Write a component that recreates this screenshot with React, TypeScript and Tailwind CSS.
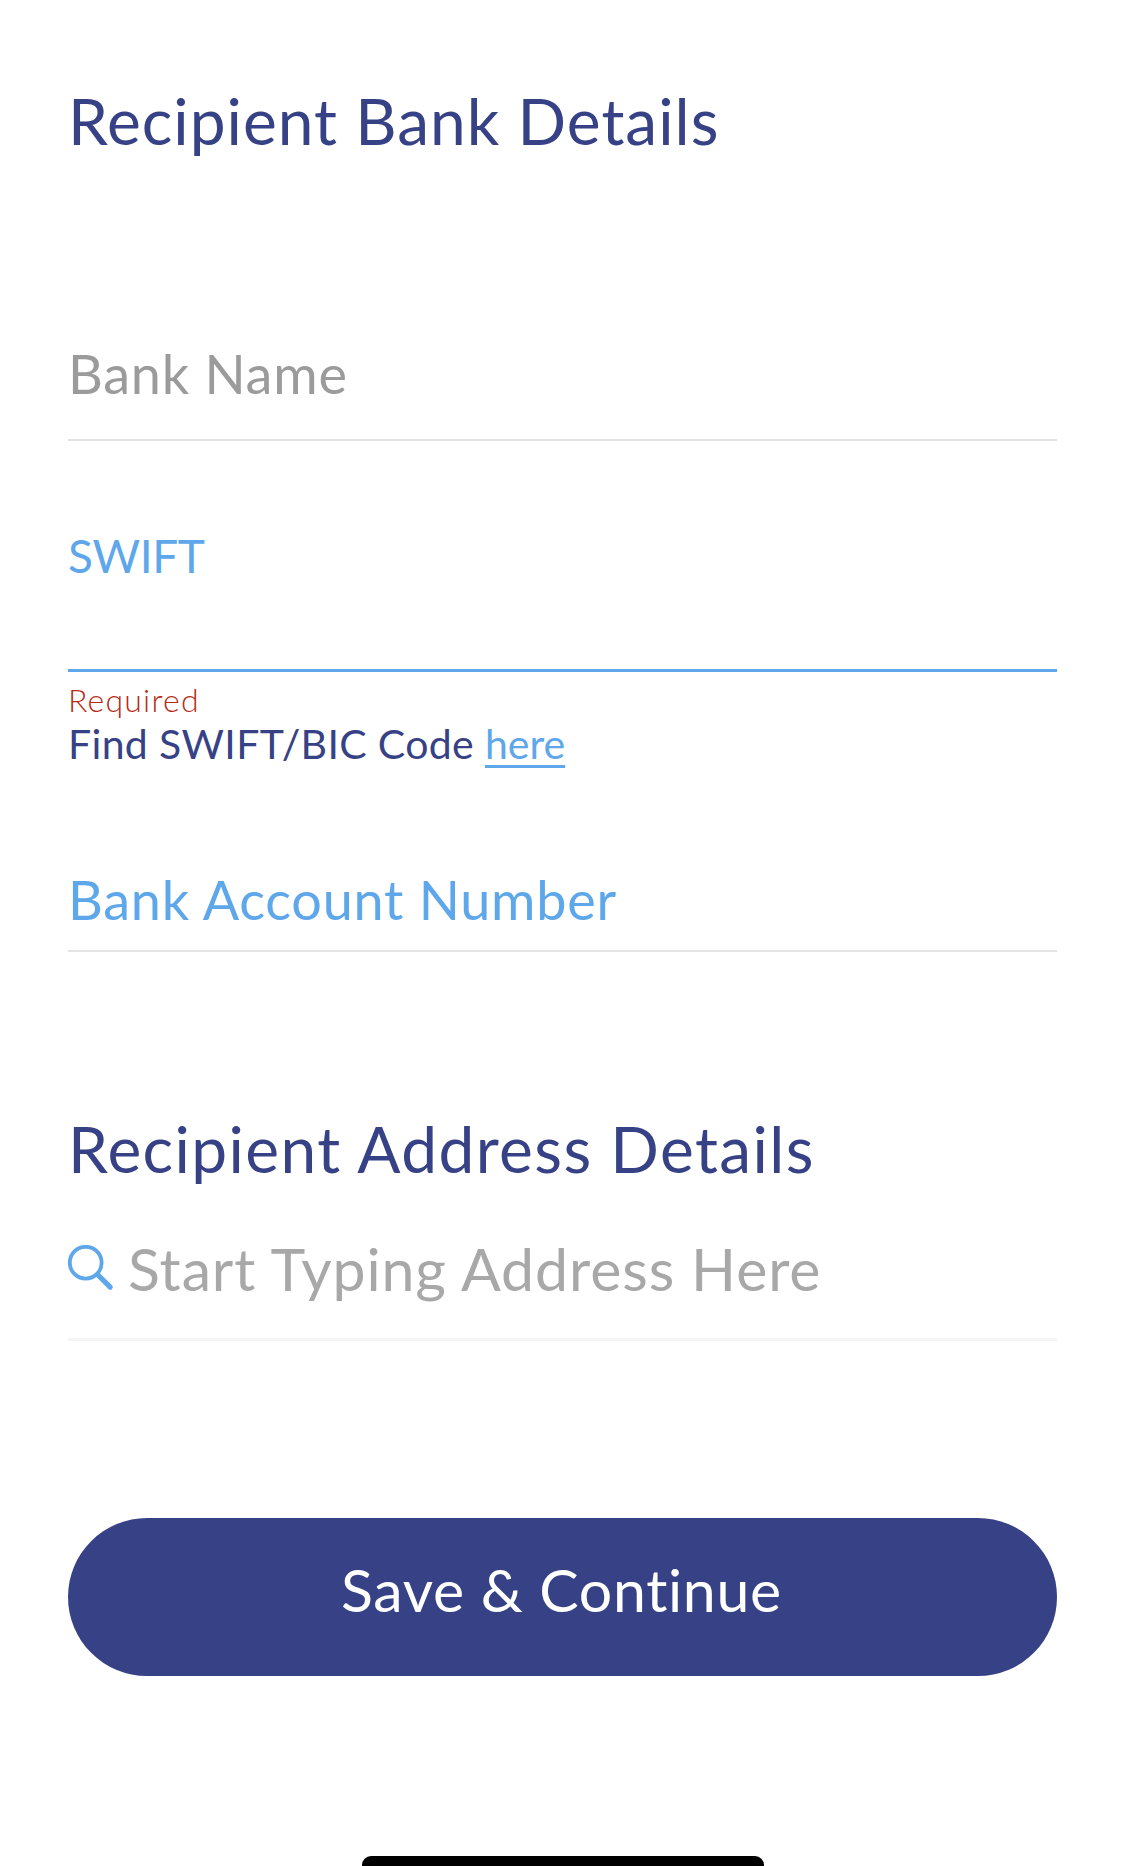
function SearchIcon() {
	return (
		<svg className="h-[46px] w-[46px] shrink-0" viewBox="0 0 46 46" fill="none">
			<circle cx="17.7" cy="17.7" r="15.9" stroke="#5da7ea" strokeWidth="3.8" />
			<path
				d="M29.5 29.5L42.2 42.2"
				stroke="#5da7ea"
				strokeWidth="5.2"
				strokeLinecap="round"
			/>
		</svg>
	)
}

export default function App() {
	return (
		<div className="flex h-[1866px] w-[1125px] flex-col overflow-hidden bg-white font-['Lato',sans-serif] [font-variant-ligatures:none]">
			<form className="flex flex-col px-[68px] pt-[81px]">
				<h1 className="text-[64px] leading-[80px] tracking-[1px] text-[#364285]">
					Recipient Bank Details
				</h1>

				<div className="mt-[181px] border-b-2 border-[#e3e3e3] pb-[33px]">
					<label className="block text-[54px] leading-[64px] tracking-[0.75px] text-[#9b9b9b]">
						Bank Name
					</label>
				</div>

				<div className="mt-[87px] border-b-3 border-[#5da7ea] pb-[85px]">
					<label className="block text-[46px] leading-[56px] tracking-[-0.4px] text-[#5da7ea]">
						SWIFT
					</label>
				</div>
				<p className="mt-[10px] text-[32px] leading-[36px] font-light tracking-[1.2px] text-[#b82a16]">
					Required
				</p>
				<p className="mt-[2px] text-[41px] leading-[48px] tracking-[0.35px] text-[#364285]">
					Find SWIFT/BIC Code{' '}
					<a
						href="#"
						className="tracking-normal text-[#5da7ea] underline decoration-3 underline-offset-[6px] [text-decoration-skip-ink:none]"
					>
						here
					</a>
				</p>

				<div className="mt-[100px] border-b-2 border-[#e3e3e3] pb-[18px]">
					<label className="block text-[54px] leading-[64px] tracking-[0.75px] text-[#5da7ea]">
						Bank Account Number
					</label>
				</div>

				<h1 className="mt-[157px] text-[64px] leading-[80px] tracking-[1.4px] text-[#364285]">
					Recipient Address Details
				</h1>
				<div className="mt-[42px] flex items-start border-b-3 border-[#f5f5f5] pb-[33px]">
					<div className="pt-[14px]">
						<SearchIcon />
					</div>
					<label className="mt-[2px] ml-[14px] text-[59px] leading-[72px] tracking-[0.9px] text-[#a8a8a8]">
						Start Typing Address Here
					</label>
				</div>

				<button
					type="button"
					className="mt-[177px] flex h-[158px] items-center justify-center rounded-full bg-[#364285] pr-[2px] pb-[13px] text-[59px] tracking-[0.7px] text-white"
				>
					Save &amp; Continue
				</button>
			</form>

			<div className="mx-auto mt-auto h-[10px] w-[402px] rounded-t-[9px] bg-black" />
		</div>
	)
}
